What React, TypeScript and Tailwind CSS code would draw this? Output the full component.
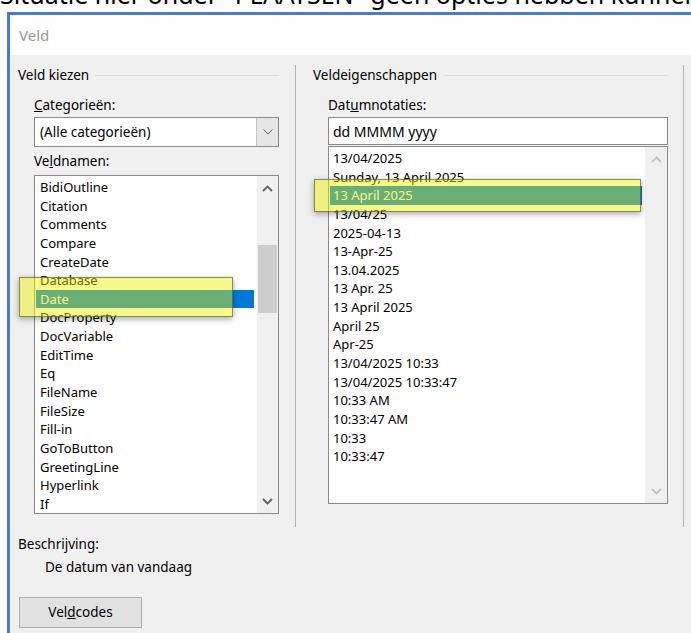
import React from 'react'

// veldnamen in de linkerlijst
const fieldNames = [
  'BidiOutline',
  'Citation',
  'Comments',
  'Compare',
  'CreateDate',
  'Database',
  'Date',
  'DocProperty',
  'DocVariable',
  'EditTime',
  'Eq',
  'FileName',
  'FileSize',
  'Fill-in',
  'GoToButton',
  'GreetingLine',
  'Hyperlink',
  'If'
]

// datumnotaties in de rechterlijst
const dateFormats = [
  '13/04/2025',
  'Sunday, 13 April 2025',
  '13 April 2025',
  '13/04/25',
  '2025-04-13',
  '13-Apr-25',
  '13.04.2025',
  '13 Apr. 25',
  '13 April 2025',
  'April 25',
  'Apr-25',
  '13/04/2025 10:33',
  '13/04/2025 10:33:47',
  '10:33 AM',
  '10:33:47 AM',
  '10:33',
  '10:33:47'
]

const Chevron = ({ up, className }: { up?: boolean; className?: string }) => (
  <svg width="11" height="7" viewBox="0 0 11 7" className={className}>
    <path
      d={up ? 'M1 6L5.5 1.5L10 6' : 'M1 1L5.5 5.5L10 1'}
      fill="none"
      stroke="currentColor"
      strokeWidth="1.8"
    />
  </svg>
)

// geel markeerstift-kader over een regel
const Marker = ({ className }: { className: string }) => (
  <div
    className={`absolute pointer-events-none border border-[rgba(70,70,30,0.6)] bg-[rgba(234,240,0,0.45)] shadow-[0_2px_6px_rgba(0,0,0,0.35)] ${className}`}
  />
)

const ListRow = ({ label, selected, pad }: { label: string; selected: boolean; pad: string }) => (
  <div
    className={`h-[18.65px] leading-[18.65px] whitespace-nowrap ${pad} ${
      selected ? 'bg-[#0078d7] text-white' : 'text-black'
    }`}
  >
    {label}
  </div>
)

const App = () => {
  return (
    <div className="relative w-[691px] h-[633px] overflow-hidden bg-white font-['Noto_Sans',sans-serif] text-[13px] text-black">
      {/* afgesneden tekstregel boven het venster */}
      <div className="h-[12px] overflow-hidden">
        <p className="mt-[-18px] text-[25px] leading-none whitespace-nowrap text-black">
          Situatie hier onder "PLAATSEN" geen opties hebben kunnen
        </p>
      </div>

      <div className="ml-[7px] w-[700px] border-l-[3px] border-t-[3px] border-[#4a7bc9]">
        {/* titelbalk */}
        <div className="h-[40px] bg-white flex items-center pl-[9px] text-[15px] text-[#9a9a9a]">
          Veld
        </div>

        <div className="bg-[#f0f0f0] pt-[10px] pb-[20px]">
          <div className="flex">
            {/* Veld kiezen */}
            <div className="w-[286px] h-[462px] border-r border-[#b4b4b4] pl-[8px] pr-[16px]">
              <div className="h-[20px] flex items-center">
                <span className="text-[13.5px]">Veld kiezen</span>
                <div className="flex-1 ml-[6px] h-px bg-[#dcdcdc]" />
              </div>

              <div className="ml-[16px]">
                <div className="mt-[11px] h-[18px] leading-[18px] text-[13.5px]">
                  <u>C</u>ategorieën:
                </div>
                <div className="mt-[3px] h-[30px] flex border border-[#8a8a8a] bg-white">
                  <div className="flex-1 flex items-center pl-[5px] text-[13.5px]">(Alle categorieën)</div>
                  <div className="w-[22px] flex items-center justify-center bg-[#e6e6e6] border-l border-[#c4c4c4]">
                    <svg width="10" height="6" viewBox="0 0 10 6" className="text-[#606060]">
                      <path d="M0.5 0.5L5 5L9.5 0.5" fill="none" stroke="currentColor" strokeWidth="1" />
                    </svg>
                  </div>
                </div>
                <div className="mt-[5px] h-[18px] leading-[18px] text-[13.5px]">
                  Ve<u>l</u>dnamen:
                </div>

                <div className="relative mt-[5px] h-[339px] flex border border-[#8a8a8a] bg-white">
                  <div className="flex-1 overflow-hidden pt-[2px] pl-[1px] pr-[3px]">
                    {fieldNames.map((name) => (
                      <ListRow key={name} label={name} selected={name === 'Date'} pad="px-[4px]" />
                    ))}
                  </div>
                  <div className="w-[21px] flex flex-col bg-[#f0f0f0] text-[#606060]">
                    <div className="h-[24px] flex items-center justify-center">
                      <Chevron up />
                    </div>
                    <div className="mt-[45px] h-[68px] mx-[1px] bg-[#cdcdcd]" />
                    <div className="flex-1" />
                    <div className="h-[24px] flex items-center justify-center">
                      <Chevron />
                    </div>
                  </div>
                  <Marker className="left-[-16px] top-[101px] w-[214px] h-[40px]" />
                </div>
              </div>
            </div>

            {/* Veldeigenschappen */}
            <div className="w-[388px] h-[462px] border-r border-[#b4b4b4] pl-[17px] pr-[15px]">
              <div className="h-[20px] flex items-center">
                <span className="text-[13.5px]">Veldeigenschappen</span>
                <div className="flex-1 ml-[7px] h-px bg-[#dcdcdc]" />
              </div>

              <div className="ml-[15px]">
                <div className="mt-[11px] h-[18px] leading-[18px] text-[13.5px]">
                  Dat<u>u</u>mnotaties:
                </div>
                <div className="mt-[3px] h-[28px] flex items-center border border-[#8a8a8a] bg-white pl-[4px] text-[14px]">
                  dd MMMM yyyy
                </div>

                <div className="relative mt-[1px] h-[358px] flex border border-[#8a8a8a] bg-white">
                  <div className="flex-1 overflow-hidden pt-[2px] pl-[1px] pr-[3px]">
                    {dateFormats.map((fmt, i) => (
                      <ListRow key={i} label={fmt} selected={i === 2} pad="px-[3px]" />
                    ))}
                  </div>
                  <div className="w-[22px] flex flex-col justify-between bg-[#f0f0f0] text-[#c2c2c2]">
                    <div className="h-[24px] flex items-center justify-center">
                      <Chevron up />
                    </div>
                    <div className="h-[24px] flex items-center justify-center">
                      <Chevron />
                    </div>
                  </div>
                  <Marker className="left-[-15px] top-[32px] w-[327px] h-[33px]" />
                </div>
              </div>
            </div>
          </div>

          {/* beschrijving en knop */}
          <div className="px-[8px] pt-[8px]">
            <div className="h-[18px] leading-[18px] text-[13.5px]">Beschrijving:</div>
            <div className="mt-[5px] ml-[27px] h-[18px] leading-[18px] text-[13.5px]">De datum van vandaag</div>
            <button className="mt-[21px] ml-[1px] w-[123px] h-[31px] border border-[#adadad] bg-[#e1e1e1] text-[13.5px] text-black">
              Vel<u>d</u>codes
            </button>
          </div>
        </div>
      </div>
    </div>
  )
}

export default App
